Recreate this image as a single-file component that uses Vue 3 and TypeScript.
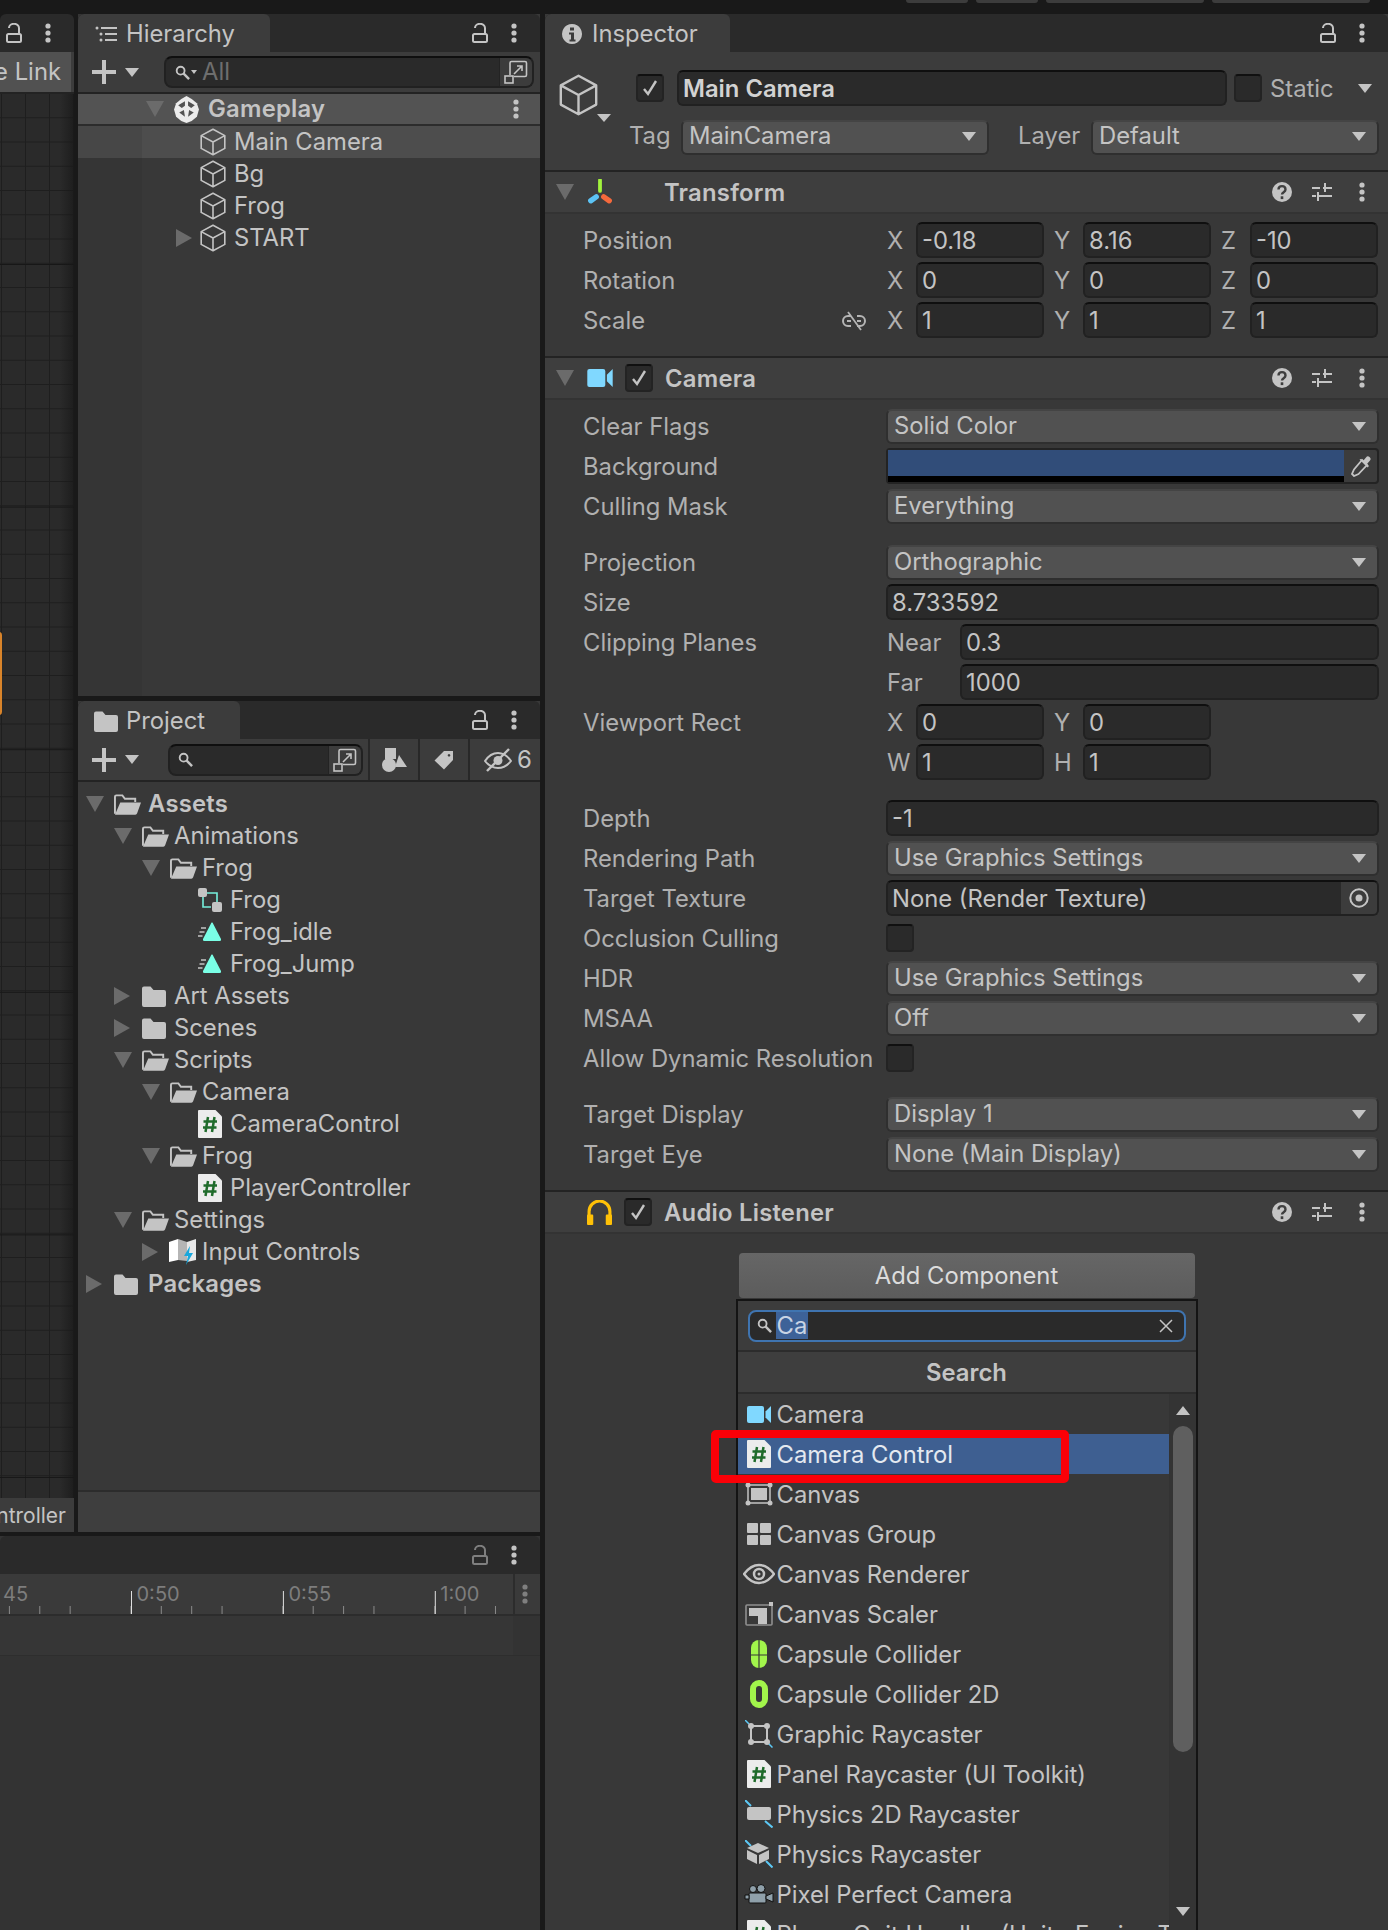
<script setup lang="ts">
type Row = {
  label: string
  kind: 'drop' | 'field' | 'obj' | 'check' | 'color' | 'plane' | 'vec'
  value?: string
  axes?: [string, string][]
  gap?: boolean
}

const hierarchyRows = [
  { name: 'Main Camera', selected: true },
  { name: 'Bg' },
  { name: 'Frog' },
  { name: 'START', arrow: 'closed' },
]

const projectRows = [
  { name: 'Assets', depth: 0, arrow: 'open', icon: 'folder-open', bold: true },
  { name: 'Animations', depth: 1, arrow: 'open', icon: 'folder-open' },
  { name: 'Frog', depth: 2, arrow: 'open', icon: 'folder-open' },
  { name: 'Frog', depth: 3, icon: 'anim-ctrl' },
  { name: 'Frog_idle', depth: 3, icon: 'clip' },
  { name: 'Frog_Jump', depth: 3, icon: 'clip' },
  { name: 'Art Assets', depth: 1, arrow: 'closed', icon: 'folder' },
  { name: 'Scenes', depth: 1, arrow: 'closed', icon: 'folder' },
  { name: 'Scripts', depth: 1, arrow: 'open', icon: 'folder-open' },
  { name: 'Camera', depth: 2, arrow: 'open', icon: 'folder-open' },
  { name: 'CameraControl', depth: 3, icon: 'script' },
  { name: 'Frog', depth: 2, arrow: 'open', icon: 'folder-open' },
  { name: 'PlayerController', depth: 3, icon: 'script' },
  { name: 'Settings', depth: 1, arrow: 'open', icon: 'folder-open' },
  { name: 'Input Controls', depth: 2, arrow: 'closed', icon: 'input-map' },
  { name: 'Packages', depth: 0, arrow: 'closed', icon: 'folder', bold: true },
]

const transformRows: Row[] = [
  { label: 'Position', kind: 'vec', axes: [['X', '-0.18'], ['Y', '8.16'], ['Z', '-10']] },
  { label: 'Rotation', kind: 'vec', axes: [['X', '0'], ['Y', '0'], ['Z', '0']] },
  { label: 'Scale', kind: 'vec', axes: [['X', '1'], ['Y', '1'], ['Z', '1']] },
]

const cameraRows: Row[] = [
  { label: 'Clear Flags', kind: 'drop', value: 'Solid Color' },
  { label: 'Background', kind: 'color' },
  { label: 'Culling Mask', kind: 'drop', value: 'Everything' },
  { label: 'Projection', kind: 'drop', value: 'Orthographic', gap: true },
  { label: 'Size', kind: 'field', value: '8.733592' },
  { label: 'Clipping Planes', kind: 'plane', axes: [['Near', '0.3']] },
  { label: '', kind: 'plane', axes: [['Far', '1000']] },
  { label: 'Viewport Rect', kind: 'vec', axes: [['X', '0'], ['Y', '0']] },
  { label: '', kind: 'vec', axes: [['W', '1'], ['H', '1']] },
  { label: 'Depth', kind: 'field', value: '-1', gap: true },
  { label: 'Rendering Path', kind: 'drop', value: 'Use Graphics Settings' },
  { label: 'Target Texture', kind: 'obj', value: 'None (Render Texture)' },
  { label: 'Occlusion Culling', kind: 'check' },
  { label: 'HDR', kind: 'drop', value: 'Use Graphics Settings' },
  { label: 'MSAA', kind: 'drop', value: 'Off' },
  { label: 'Allow Dynamic Resolution', kind: 'check' },
  { label: 'Target Display', kind: 'drop', value: 'Display 1', gap: true },
  { label: 'Target Eye', kind: 'drop', value: 'None (Main Display)' },
]

const searchResults = [
  { name: 'Camera', icon: 'camera' },
  { name: 'Camera Control', icon: 'script', active: true },
  { name: 'Canvas', icon: 'canvas' },
  { name: 'Canvas Group', icon: 'canvas-group' },
  { name: 'Canvas Renderer', icon: 'eye' },
  { name: 'Canvas Scaler', icon: 'scaler' },
  { name: 'Capsule Collider', icon: 'capsule' },
  { name: 'Capsule Collider 2D', icon: 'capsule-2d' },
  { name: 'Graphic Raycaster', icon: 'graphic-ray' },
  { name: 'Panel Raycaster (UI Toolkit)', icon: 'script' },
  { name: 'Physics 2D Raycaster', icon: 'ray-2d' },
  { name: 'Physics Raycaster', icon: 'ray-3d' },
  { name: 'Pixel Perfect Camera', icon: 'pixel-cam' },
  { name: 'Player Quit Handler (Unity Engine.T', icon: 'script' },
]

// timeline ruler: a tick every 30.4px, a long one with a label every fifth
const minorTicks = Array.from({ length: 18 }, (_, i) => 9.4 + i * 30.38).filter(
  (_, i) => (i + 1) % 5 !== 4,
)
const majorTicks = [
  { x: 131.5, label: '0:50' },
  { x: 283.4, label: '0:55' },
  { x: 435.3, label: '1:00' },
]
</script>

<template>
  <!-- shared icon sheet -->
  <svg class="defs" aria-hidden="true">
    <symbol id="lock" viewBox="0 0 16 20"><path d="M3 5a5 4.200 0 0 1 10 0v6" fill="none" stroke="currentColor" stroke-width="2"/><rect x="1" y="11" width="14" height="8" rx="1.500" fill="none" stroke="currentColor" stroke-width="2"/></symbol>
    <symbol id="dots" viewBox="0 0 8 20"><circle cx="4" cy="3" r="2.600" fill="currentColor"/><circle cx="4" cy="10" r="2.600" fill="currentColor"/><circle cx="4" cy="17" r="2.600" fill="currentColor"/></symbol>
    <symbol id="list" viewBox="0 0 22 16"><circle cx="2" cy="2" r="1.500" fill="currentColor"/><circle cx="6" cy="8" r="1.500" fill="currentColor"/><circle cx="6" cy="14" r="1.500" fill="currentColor"/><path d="M6 2h16M10 8h12M10 14h12" stroke="currentColor" stroke-width="2"/></symbol>
    <symbol id="plus" viewBox="0 0 24 24"><path d="M12 0v24M0 12h24" stroke="currentColor" stroke-width="4"/></symbol>
    <symbol id="search" viewBox="0 0 16 16"><circle cx="6" cy="6" r="4.200" fill="none" stroke="currentColor" stroke-width="2"/><path d="M9 9l6 6" stroke="currentColor" stroke-width="2.600"/></symbol>
    <symbol id="expand" viewBox="0 0 24 24"><path d="M6 15V3a1.500 1.500 0 0 1 1.500-1.500H21A1.500 1.500 0 0 1 22.500 3v12a1.500 1.500 0 0 1-1.500 1.500H10" fill="none" stroke="currentColor" stroke-width="1.600"/><rect x="1" y="16" width="8" height="7" fill="none" stroke="currentColor" stroke-width="1.600"/><path d="M10 14l8-8M13 6h5v5" fill="none" stroke="currentColor" stroke-width="1.600"/></symbol>
    <symbol id="cube" viewBox="0 0 26 28"><path d="M13 1.200l11.800 6.400v12.800L13 26.800 1.200 20.400V7.600zM1.200 7.600L13 14l11.800-6.400M13 14v12.800" fill="none" stroke="currentColor" stroke-width="1.600" stroke-linejoin="round"/></symbol>
    <symbol id="unity" viewBox="0 0 24 26"><path d="M12 0l5 3 5 4 2 6-2 7-5 4-5 2-5-2-5-4-2-7 2-6 5-4z" fill="#ececec"/><path d="M4 9l6.500-4v4.500l-3 2zM20 9l-6.500-4v4.500l3 2zM5 16l4.500-2.500 1 6.500zM19 16l-4.500-2.500-1 6.500z" fill="#535353"/></symbol>
    <symbol id="folder" viewBox="0 0 24 21"><path d="M0 2.500A2 2 0 0 1 2 .5h6.500l3 3.500H22a2 2 0 0 1 2 2v13a2 2 0 0 1-2 2H2a2 2 0 0 1-2-2z" fill="currentColor"/></symbol>
    <symbol id="folder-open" viewBox="0 0 28 21"><path d="M1 20V2.500A1.500 1.500 0 0 1 2.500 1h6.200l2.600 3.500H22V8" fill="none" stroke="currentColor" stroke-width="2"/><path d="M6.500 8.500H28l-4 11a2 2 0 0 1-2 1.500H1z" fill="currentColor"/></symbol>
    <symbol id="anim-ctrl" viewBox="0 0 24 24"><path d="M5 8v11h8M9 5h10v9" fill="none" stroke="#76f0dc" stroke-width="1.600"/><rect x="0" y="0" width="9" height="9" rx="2" fill="#c4c4c4"/><rect x="14" y="14" width="10" height="10" rx="2" fill="#c4c4c4"/></symbol>
    <symbol id="clip" viewBox="0 0 24 20"><path d="M15 1.500l8 15.500a1.500 1.500 0 0 1-1.300 2H6.300A1.500 1.500 0 0 1 5 17l8-15.500a1 1 0 0 1 2 0z" fill="#7affe6"/><path d="M3 6h5M1.500 10h5M0 14h4.500" stroke="#c4c4c4" stroke-width="1.500"/></symbol>
    <symbol id="script" viewBox="0 0 24 28"><path d="M0 1a1 1 0 0 1 1-1h16.500L24 6.500V27a1 1 0 0 1-1 1H1a1 1 0 0 1-1-1z" fill="#ececec"/><path d="M10 7L7.500 22M16.500 7L14 22M5.500 11.500h13.500M5 17.500h13.500" stroke="#1f6b2b" stroke-width="2.500"/></symbol>
    <symbol id="input-map" viewBox="0 0 28 26"><path d="M1 3l9-3v21l-9 2z" fill="#fff"/><path d="M10 0l9 3v19l-9-1z" fill="#b5b5b5"/><path d="M19 3l9-3v21l-9 2z" fill="#e8e8e8"/><path d="M22 7l-6 10h4l-2 9 7-12h-4z" fill="#19a7dc"/></symbol>
    <symbol id="filter-shapes" viewBox="0 0 25 24"><rect x="3" y="0" width="11" height="11" fill="currentColor"/><circle cx="7" cy="17" r="7" fill="currentColor"/><path d="M17 7l8 12H13z" fill="currentColor"/></symbol>
    <symbol id="tag" viewBox="0 0 20 20"><path d="M10 1h9v9l-9 9.500L.5 10.500zM15 4a1.300 1.300 0 1 0 .01 0" fill="currentColor" fill-rule="evenodd"/></symbol>
    <symbol id="eye-off" viewBox="0 0 28 24"><path d="M1 13c4-6 8-8 13-8s9 2 13 8c-4 5-8 7-13 7S5 18 1 13z" fill="none" stroke="currentColor" stroke-width="2"/><circle cx="14" cy="12.500" r="4.500" fill="currentColor"/><path d="M3 23L25 1" stroke="currentColor" stroke-width="2.400"/></symbol>
    <symbol id="info" viewBox="0 0 20 20"><path d="M10 0a10 10 0 1 0 .01 0zM8 3.500h4v3H8zM7 8.500h5v7h1.500v2h-6v-2H9v-5H7z" fill="currentColor" fill-rule="evenodd"/></symbol>
    <symbol id="help" viewBox="0 0 20 20"><circle cx="10" cy="10" r="10" fill="currentColor"/><path d="M6.500 7.500C6.500 3 13.500 3 13.500 7.500c0 2.800-3.500 2.500-3.500 5" fill="none" stroke="#3e3e3e" stroke-width="2.400"/><rect x="8.700" y="14.300" width="2.600" height="2.800" fill="#3e3e3e"/></symbol>
    <symbol id="sliders" viewBox="0 0 20 20"><path d="M0 6h8M11 6h9M13 1v9M0 14h4M7 14h13M6 10v9" stroke="currentColor" stroke-width="2"/></symbol>
    <symbol id="transform" viewBox="0 0 24 24"><path d="M12 1v10" stroke="#a2f33d" stroke-width="3.500" stroke-linecap="round"/><path d="M15.500 16.500l5 3.500" stroke="#f5693c" stroke-width="5" stroke-linecap="round"/><path d="M8.500 16.500L3.500 20" stroke="#5cc3f5" stroke-width="5" stroke-linecap="round"/></symbol>
    <symbol id="camera" viewBox="0 0 24 17"><rect x="0" y="0" width="17" height="17" rx="2" fill="#80d8ff"/><path d="M18.500 5.500L24 0v17l-5.500-5.500z" fill="#80d8ff"/></symbol>
    <symbol id="headphones" viewBox="0 0 24 24"><path d="M2 22V11a10 10 0 0 1 20 0v11" fill="none" stroke="#ffc107" stroke-width="3"/><rect x="0" y="14" width="6" height="10" rx="1" fill="#ffc107"/><rect x="18" y="14" width="6" height="10" rx="1" fill="#ffc107"/></symbol>
    <symbol id="check" viewBox="0 0 18 18"><path d="M3 10l4 5 8-13" fill="none" stroke="currentColor" stroke-width="2.400"/></symbol>
    <symbol id="dropper" viewBox="0 0 20 22"><path d="M11 5l5 5-8.500 9L3 21l-2-2 2-4.500z" fill="none" stroke="currentColor" stroke-width="1.800"/><path d="M10 4l2 2 3-3.500a2 2 0 0 1 4 3L16 9l2 2-1.500 1.500-8-8z" fill="currentColor"/></symbol>
    <symbol id="target" viewBox="0 0 20 20"><circle cx="10" cy="10" r="8.700" fill="none" stroke="currentColor" stroke-width="2"/><circle cx="10" cy="10" r="3.500" fill="currentColor"/></symbol>
    <symbol id="unlink" viewBox="0 0 24 20"><path d="M9 5H6a5 5 0 0 0 0 10h3M15 5h3a5 5 0 0 1 0 10h-3M5 10h4M15 10h4" fill="none" stroke="currentColor" stroke-width="2"/><path d="M6 1l13 18" stroke="currentColor" stroke-width="1.800"/></symbol>
    <symbol id="close" viewBox="0 0 14 14"><path d="M1 1l12 12M13 1L1 13" stroke="currentColor" stroke-width="1.500"/></symbol>
    <symbol id="canvas" viewBox="0 0 28 24"><rect x="3" y="3" width="22" height="18" fill="none" stroke="#c4c4c4" stroke-width="1.500"/><rect x="6" y="6" width="16" height="12" fill="#c4c4c4"/><g fill="#c4c4c4"><circle cx="3" cy="3" r="2.500"/><circle cx="25" cy="3" r="2.500"/><circle cx="3" cy="21" r="2.500"/><circle cx="25" cy="21" r="2.500"/></g></symbol>
    <symbol id="canvas-group" viewBox="0 0 26 22"><g fill="#c4c4c4"><rect x="1" y="0" width="11" height="10" rx="1"/><rect x="14" y="0" width="11" height="10" rx="1"/><rect x="1" y="12" width="11" height="10" rx="1"/><rect x="14" y="12" width="11" height="10" rx="1"/></g></symbol>
    <symbol id="eye" viewBox="0 0 32 22"><path d="M1 11c5-6.500 10-9 15-9s10 2.500 15 9c-5 6.500-10 9-15 9S6 17.500 1 11z" fill="none" stroke="#c4c4c4" stroke-width="2.400"/><circle cx="16" cy="11" r="5" fill="none" stroke="#c4c4c4" stroke-width="2.500"/><circle cx="16" cy="11" r="1.500" fill="#c4c4c4"/></symbol>
    <symbol id="scaler" viewBox="0 0 28 24"><rect x="1" y="3" width="26" height="20" rx="1" fill="none" stroke="#8f8f8f" stroke-width="1.600"/><path d="M4 6h18v16h-9v-8H4z" fill="#c4c4c4"/><rect x="24" y="0" width="4" height="4" fill="#c4c4c4"/></symbol>
    <symbol id="capsule" viewBox="0 0 16 28"><path d="M8 0a8 8 0 0 1 8 8v12a8 8 0 0 1-16 0V8a8 8 0 0 1 8-8z" fill="#a2f54b"/><path d="M8 0v28M0 15h16" stroke="#383838" stroke-width="1.200"/></symbol>
    <symbol id="capsule-2d" viewBox="0 0 18 28"><path d="M9 0a9 9 0 0 1 9 9v10a9 9 0 0 1-18 0V9a9 9 0 0 1 9-9zm0 6a3 3 0 0 0-3 3v10a3 3 0 0 0 6 0V9a3 3 0 0 0-3-3z" fill="#a2f54b" fill-rule="evenodd"/></symbol>
    <symbol id="graphic-ray" viewBox="0 0 28 28"><path d="M0 0l4 4M23 23l4.500 4.500" stroke="#5cc8f5" stroke-width="1.500"/><rect x="6" y="6" width="16" height="16" fill="none" stroke="#c4c4c4" stroke-width="2"/><g fill="#c4c4c4"><circle cx="6" cy="6" r="3"/><circle cx="22" cy="6" r="3"/><circle cx="6" cy="22" r="3"/><circle cx="22" cy="22" r="3"/></g></symbol>
    <symbol id="ray-2d" viewBox="0 0 28 28"><path d="M0 0l6 6M20 21l7.500 6.500" stroke="#5cc8f5" stroke-width="2"/><rect x="2" y="7" width="24" height="13" rx="2" fill="#c4c4c4"/></symbol>
    <symbol id="ray-3d" viewBox="0 0 28 28"><path d="M0 0l6 6M21 21l6.500 6.500" stroke="#5cc8f5" stroke-width="2"/><path d="M13 3l11 5-11 5L2 8z" fill="#c4c4c4"/><path d="M2 10l10 5v9L2 19zM14 15l10-5v9l-10 5z" fill="#c4c4c4"/></symbol>
    <symbol id="pixel-cam" viewBox="0 0 30 20"><g fill="#8fa0aa" stroke="#111" stroke-width="1"><circle cx="9" cy="5" r="3.500"/><circle cx="17" cy="4.500" r="4"/><rect x="5" y="9" width="17" height="10" rx="1"/><path d="M22 12l7-3v9l-7-3z"/><path d="M1 11h4v4H1z"/></g></symbol>
  </svg>

  <div class="editor">
    <div class="topbar">
      <span class="top-btn short" />
      <span class="top-btn short" />
      <span class="top-btn long" />
      <span class="top-btn long" />
    </div>

    <div class="left">
      <div class="upper">
        <!-- scene view, mostly off-screen -->
        <section class="scene">
          <div class="tabs scene-tabs">
            <svg class="ic-lock"><use href="#lock" /></svg>
            <svg class="ic-dots"><use href="#dots" /></svg>
          </div>
          <div class="scene-toolbar"><span class="scene-link">e Link</span></div>
          <div class="scene-grid">
            <i class="scene-gizmo" />
          </div>
          <div class="scene-status">ntroller</div>
        </section>

        <div class="side">
          <section class="hierarchy">
            <div class="tabs">
              <div class="tab tab-hierarchy">
                <svg class="ic-list"><use href="#list" /></svg>Hierarchy
              </div>
              <span class="tabs-fill" />
              <svg class="ic-lock"><use href="#lock" /></svg>
              <svg class="ic-dots"><use href="#dots" /></svg>
            </div>
            <div class="toolbar">
              <svg class="ic-plus"><use href="#plus" /></svg>
              <i class="tri-down small" />
              <div class="searchbox hier-search">
                <svg class="ic-search"><use href="#search" /></svg>
                <i class="tri-down tiny" />
                <span class="placeholder">All</span>
                <span class="tabs-fill" />
                <span class="expand"><svg><use href="#expand" /></svg></span>
              </div>
            </div>
            <div class="scene-row">
              <i class="tri-down" />
              <svg class="ic-unity"><use href="#unity" /></svg>
              <span class="bold">Gameplay</span>
              <span class="tabs-fill" />
              <svg class="ic-dots"><use href="#dots" /></svg>
            </div>
            <div class="hier-list">
              <div
                v-for="row in hierarchyRows"
                :key="row.name"
                class="hier-row"
                :class="{ selected: row.selected }"
              >
                <span class="arrow-slot"><i v-if="row.arrow" class="tri-right" /></span>
                <svg class="ic-cube"><use href="#cube" /></svg>
                <span>{{ row.name }}</span>
              </div>
            </div>
          </section>

          <section class="project">
            <div class="tabs">
              <div class="tab tab-project">
                <svg class="ic-folder-tab"><use href="#folder" /></svg>Project
              </div>
              <span class="tabs-fill" />
              <svg class="ic-lock"><use href="#lock" /></svg>
              <svg class="ic-dots"><use href="#dots" /></svg>
            </div>
            <div class="toolbar project-toolbar">
              <svg class="ic-plus"><use href="#plus" /></svg>
              <i class="tri-down small" />
              <div class="searchbox proj-search">
                <svg class="ic-search"><use href="#search" /></svg>
                <span class="tabs-fill" />
                <span class="expand"><svg><use href="#expand" /></svg></span>
              </div>
              <div class="tool-btn"><svg class="ic-shapes"><use href="#filter-shapes" /></svg></div>
              <div class="tool-btn"><svg class="ic-tag"><use href="#tag" /></svg></div>
              <div class="tool-btn tool-eye"><svg class="ic-eye-off"><use href="#eye-off" /></svg>6</div>
            </div>
            <div class="proj-tree">
              <div
                v-for="(row, i) in projectRows"
                :key="i"
                class="proj-row"
                :class="{ 'bold proj-top': row.bold }"
                :style="{ paddingLeft: 8 + row.depth * 28 + 'px' }"
              >
                <span class="arrow-slot">
                  <i v-if="row.arrow === 'open'" class="tri-down" />
                  <i v-else-if="row.arrow === 'closed'" class="tri-right" />
                </span>
                <svg class="ic-tree" :class="'tree-' + row.icon"><use :href="'#' + row.icon" /></svg>
                <span>{{ row.name }}</span>
              </div>
            </div>
            <div class="proj-footer" />
          </section>
        </div>
      </div>

      <section class="timeline">
        <div class="tabs">
          <span class="tabs-fill" />
          <svg class="ic-lock muted"><use href="#lock" /></svg>
          <svg class="ic-dots"><use href="#dots" /></svg>
        </div>
        <div class="ruler-row">
          <svg class="ruler" width="513" height="40">
            <text x="3" y="27" class="ruler-label">45</text>
            <line v-for="x in minorTicks" :key="x" :x1="x" :x2="x" y1="32" y2="40" stroke="#8a8a8a" />
            <g v-for="t in majorTicks" :key="t.label">
              <line :x1="t.x" :x2="t.x" y1="17" y2="40" stroke="#e0e0e0" />
              <text :x="t.x + 5" y="27" class="ruler-label">{{ t.label }}</text>
            </g>
          </svg>
          <div class="ruler-menu"><svg class="ic-dots muted"><use href="#dots" /></svg></div>
        </div>
        <div class="track-row"><span /></div>
      </section>
    </div>

    <section class="inspector">
      <div class="tabs">
        <div class="tab tab-inspector">
          <svg class="ic-info"><use href="#info" /></svg>Inspector
        </div>
        <span class="tabs-fill" />
        <svg class="ic-lock"><use href="#lock" /></svg>
        <svg class="ic-dots"><use href="#dots" /></svg>
      </div>

      <div class="object-head">
        <div class="object-icon">
          <svg class="ic-cube-big"><use href="#cube" /></svg>
          <i class="tri-down tiny2" />
        </div>
        <div class="object-fields">
          <div class="name-row">
            <span class="checkbox"><svg><use href="#check" /></svg></span>
            <div class="input name-input">Main Camera</div>
            <span class="checkbox" />
            <span class="static-label">Static</span>
            <i class="tri-down small" />
          </div>
          <div class="tag-row">
            <span class="tag-label">Tag</span>
            <div class="dropdown tag-drop">MainCamera<i class="tri-down mini" /></div>
            <span class="layer-label">Layer</span>
            <div class="dropdown layer-drop">Default<i class="tri-down mini" /></div>
          </div>
        </div>
      </div>

      <div class="comp-header">
        <i class="tri-down" />
        <svg class="ic-comp"><use href="#transform" /></svg>
        <span class="comp-check-slot" />
        <span class="bold">Transform</span>
        <span class="tabs-fill" />
        <svg class="ic-help"><use href="#help" /></svg>
        <svg class="ic-sliders"><use href="#sliders" /></svg>
        <svg class="ic-dots"><use href="#dots" /></svg>
      </div>
      <div class="comp-body">
        <div v-for="row in transformRows" :key="row.label" class="prop">
          <span class="prop-label">{{ row.label }}</span>
          <svg v-if="row.label === 'Scale'" class="ic-unlink"><use href="#unlink" /></svg>
          <div class="vec">
            <div v-for="a in row.axes" :key="a[0]" class="vec-cell">
              <span class="axis">{{ a[0] }}</span>
              <div class="input">{{ a[1] }}</div>
            </div>
          </div>
        </div>
      </div>

      <div class="comp-header">
        <i class="tri-down" />
        <svg class="ic-cam"><use href="#camera" /></svg>
        <span class="checkbox comp-check"><svg><use href="#check" /></svg></span>
        <span class="bold">Camera</span>
        <span class="tabs-fill" />
        <svg class="ic-help"><use href="#help" /></svg>
        <svg class="ic-sliders"><use href="#sliders" /></svg>
        <svg class="ic-dots"><use href="#dots" /></svg>
      </div>
      <div class="comp-body">
        <div
          v-for="(row, i) in cameraRows"
          :key="i"
          class="prop"
          :class="{ 'prop-gap': row.gap }"
        >
          <span class="prop-label">{{ row.label }}</span>
          <div v-if="row.kind === 'drop'" class="dropdown wide">
            {{ row.value }}<i class="tri-down mini" />
          </div>
          <div v-else-if="row.kind === 'field'" class="input wide">{{ row.value }}</div>
          <div v-else-if="row.kind === 'obj'" class="input wide obj-field">
            {{ row.value }}
            <span class="obj-pick"><svg><use href="#target" /></svg></span>
          </div>
          <span v-else-if="row.kind === 'check'" class="checkbox" />
          <div v-else-if="row.kind === 'color'" class="color-field">
            <div class="swatch"><span class="swatch-blue" /><span class="swatch-alpha" /></div>
            <span class="dropper"><svg><use href="#dropper" /></svg></span>
          </div>
          <div v-else-if="row.kind === 'plane'" class="plane">
            <span class="plane-label">{{ row.axes![0][0] }}</span>
            <div class="input">{{ row.axes![0][1] }}</div>
          </div>
          <div v-else class="vec">
            <div v-for="a in row.axes" :key="a[0]" class="vec-cell">
              <span class="axis">{{ a[0] }}</span>
              <div class="input">{{ a[1] }}</div>
            </div>
          </div>
        </div>
      </div>

      <div class="comp-header audio-header">
        <span class="tri-slot" />
        <svg class="ic-phones"><use href="#headphones" /></svg>
        <span class="checkbox comp-check"><svg><use href="#check" /></svg></span>
        <span class="bold">Audio Listener</span>
        <span class="tabs-fill" />
        <svg class="ic-help"><use href="#help" /></svg>
        <svg class="ic-sliders"><use href="#sliders" /></svg>
        <svg class="ic-dots"><use href="#dots" /></svg>
      </div>

      <div class="add-area">
        <div class="add-button">Add Component</div>
        <div class="picker">
          <div class="picker-search">
            <div class="picker-input">
              <svg class="ic-search"><use href="#search" /></svg>
              <span class="picker-sel">Ca</span>
              <span class="tabs-fill" />
              <svg class="ic-close"><use href="#close" /></svg>
            </div>
          </div>
          <div class="picker-title">Search</div>
          <div class="picker-body">
            <div class="picker-list">
              <div
                v-for="item in searchResults"
                :key="item.name"
                class="picker-row"
                :class="{ active: item.active }"
              >
                <span class="picker-icon">
                  <svg :class="'pi-' + item.icon"><use :href="'#' + item.icon" /></svg>
                </span>
                <span class="picker-name">{{ item.name }}</span>
              </div>
            </div>
            <div class="scrollbar">
              <i class="tri-up" />
              <span class="thumb" />
              <i class="tri-down scroll-down" />
            </div>
          </div>
          <div class="callout" />
        </div>
      </div>
    </section>
  </div>
</template>

<style scoped>
.defs {
  position: absolute;
  width: 0;
  height: 0;
}
.editor {
  display: grid;
  grid-template-columns: 540px 843px;
  grid-template-rows: 14px 1916px;
  column-gap: 5px;
  width: 1388px;
  height: 1930px;
  overflow: hidden;
  background: #191919;
  color: #c4c4c4;
  font-family: Inter, "Noto Sans", sans-serif;
  font-size: 23.8px;
  line-height: 1;
}
.topbar {
  grid-column: 1 / 3;
  display: flex;
  gap: 8px;
  padding-left: 906px;
  height: 3px;
}
.top-btn {
  background: #3c3c3c;
  border-radius: 0 0 3px 3px;
}
.top-btn.short {
  width: 62px;
}
.top-btn.long {
  width: 158px;
}
.left {
  display: flex;
  flex-direction: column;
  gap: 4px;
  min-height: 0;
}
.upper {
  display: grid;
  grid-template-columns: 74px 462px;
  gap: 4px;
  height: 1518px;
}
.side {
  display: flex;
  flex-direction: column;
  gap: 5px;
}
section {
  overflow: hidden;
}
.bold {
  font-weight: 600;
  letter-spacing: .25px;
}
.tabs {
  display: flex;
  align-items: center;
  flex: none;
  height: 38px;
  padding-right: 22px;
  background: #2a2a2a;
  border-radius: 6px 6px 0 0;
  overflow: hidden;
}
.tabs-fill {
  flex: 1;
}
.tab {
  display: flex;
  align-items: center;
  align-self: stretch;
  padding-top: 2px;
  background: #3c3c3c;
  border-radius: 6px 6px 0 0;
  box-sizing: border-box;
}
.tab-hierarchy {
  width: 192px;
  padding-left: 17px;
  gap: 9px;
}
.tab-project {
  width: 162px;
  padding-left: 16px;
  gap: 8px;
}
.tab-inspector {
  width: 185px;
  padding-left: 17px;
  gap: 10px;
}
.ic-list {
  width: 22px;
  height: 16px;
}
.ic-folder-tab {
  width: 24px;
  height: 21px;
}
.ic-info {
  width: 20px;
  height: 20px;
}
.ic-lock {
  width: 16px;
  height: 20px;
  margin-right: 22px;
}
.ic-dots {
  width: 8px;
  height: 20px;
}
.muted {
  color: #7f7f7f;
}
.toolbar {
  display: flex;
  align-items: center;
  flex: none;
  height: 40px;
  background: #3c3c3c;
  border-bottom: 2px solid #232323;
  padding-left: 14px;
}
.ic-plus {
  width: 24px;
  height: 24px;
  margin-right: 9px;
}
.tri-down {
  display: inline-block;
  flex: none;
  width: 0;
  height: 0;
  border-left: 9px solid transparent;
  border-right: 9px solid transparent;
  border-top: 16px solid #6b6b6b;
}
.tri-right {
  display: inline-block;
  width: 0;
  height: 0;
  border-top: 9px solid transparent;
  border-bottom: 9px solid transparent;
  border-left: 16px solid #6b6b6b;
}
.tri-up {
  display: block;
  width: 0;
  height: 0;
  border-left: 7px solid transparent;
  border-right: 7px solid transparent;
  border-bottom: 9px solid #c4c4c4;
}
.tri-down.small {
  border-left-width: 7px;
  border-right-width: 7px;
  border-top: 9px solid #c4c4c4;
}
.tri-down.tiny {
  border-left-width: 3px;
  border-right-width: 3px;
  border-top: 4px solid #c4c4c4;
}
.tri-down.mini {
  border-left-width: 7px;
  border-right-width: 7px;
  border-top: 9px solid #c4c4c4;
  margin-left: auto;
}
.tri-down.tiny2 {
  border-left-width: 7px;
  border-right-width: 7px;
  border-top: 8px solid #c4c4c4;
}
.searchbox {
  display: flex;
  align-items: center;
  box-sizing: border-box;
  height: 32px;
  background: #2a2a2a;
  border: 2px solid #212121;
  border-top-color: #0f0f0f;
  border-radius: 8px;
  overflow: hidden;
}
.hier-search {
  width: 370px;
  margin-left: 25px;
  padding-left: 9px;
  gap: 1px;
}
.proj-search {
  flex: none;
  width: 195px;
  margin-left: 29px;
  padding-left: 8px;
}
.ic-search {
  width: 15px;
  height: 15px;
  flex: none;
}
.placeholder {
  margin-left: 4px;
  color: #6e6e6e;
}
.expand {
  display: flex;
  align-items: center;
  justify-content: center;
  width: 32px;
  align-self: stretch;
  background: #3c3c3c;
  border-left: 1px solid #232323;
}
.expand svg {
  width: 24px;
  height: 24px;
}
/* hierarchy */
.hierarchy {
  display: flex;
  flex-direction: column;
  height: 682px;
  background: linear-gradient(90deg, #353535 64px, #383838 64px);
}
.scene-row {
  display: flex;
  align-items: center;
  flex: none;
  height: 30px;
  padding: 0 20px 0 68px;
  background: #535353;
  border-bottom: 2px solid #2c2c2c;
}
.ic-unity {
  width: 25px;
  height: 27px;
  margin: 0 9px 0 10px;
}
.hier-list {
  display: flex;
  flex-direction: column;
}
.hier-row {
  display: flex;
  align-items: center;
  height: 32px;
  padding-left: 96px;
}
.hier-row.selected {
  background: linear-gradient(90deg, #474747 64px, #4d4d4d 64px);
}
.hier-row .arrow-slot {
  justify-content: flex-end;
  margin-right: 8px;
}
.arrow-slot {
  display: flex;
  align-items: center;
  flex: none;
  width: 18px;
  margin-right: 10px;
}
.ic-cube {
  width: 26px;
  height: 28px;
  margin-right: 8px;
}
/* project */
.project {
  display: flex;
  flex-direction: column;
  flex: 1;
  background: #383838;
}
.project-toolbar {
  height: 41px;
  padding-right: 0;
}
.tool-btn {
  display: flex;
  align-items: center;
  justify-content: center;
  align-self: stretch;
  width: 50px;
  border-left: 2px solid #282828;
  box-sizing: border-box;
}
.tool-btn:nth-of-type(2) {
  margin-left: 5px;
}
.tool-eye {
  width: 68px;
  justify-content: flex-start;
  padding-left: 14px;
  gap: 5px;
  font-size: 24px;
}
.ic-shapes {
  width: 25px;
  height: 24px;
}
.ic-tag {
  width: 20px;
  height: 20px;
}
.ic-eye-off {
  width: 28px;
  height: 24px;
}
.proj-tree {
  flex: 1;
  padding-top: 6px;
}
.proj-row {
  display: flex;
  align-items: center;
  height: 32px;
}
.ic-tree {
  flex: none;
  width: 27px;
  height: 22px;
  margin-right: 5px;
}
.proj-top .ic-tree {
  margin-right: 7px;
}
.tree-folder {
  width: 24px;
  height: 21px;
  margin-right: 8px;
}
.proj-top .tree-folder {
  margin-right: 10px;
}
.tree-folder-open {
  height: 21px;
}
.tree-anim-ctrl,
.tree-clip {
  width: 24px;
  height: 24px;
  margin-right: 8px;
}
.tree-script {
  width: 24px;
  height: 28px;
  margin-right: 8px;
}
.tree-input-map {
  width: 28px;
  height: 26px;
  margin: 0 6px 0 -2px;
}
.proj-footer {
  flex: none;
  height: 40px;
  background: #3e3e3e;
  border-top: 2px solid #2c2c2c;
}
/* scene */
.scene {
  display: flex;
  flex-direction: column;
  height: 100%;
}
.scene-tabs {
  padding: 0 0 0 6px;
}
.scene-toolbar {
  flex: none;
  height: 40px;
  background: #3c3c3c;
  overflow: hidden;
}
.scene-link {
  display: flex;
  align-items: center;
  justify-content: flex-end;
  box-sizing: border-box;
  width: 71px;
  height: 40px;
  padding-right: 10px;
  background: #515151;
  white-space: nowrap;
}
.scene-grid {
  flex: 1;
  position: relative;
  background-color: #2a2a2a;
  background-image:
    linear-gradient(90deg, transparent 60px, rgba(24, 24, 24, .7) 74px),
    linear-gradient(#171717 1px, transparent 1px),
    linear-gradient(#1e1e1e 1px, transparent 1px),
    linear-gradient(90deg, #1e1e1e 1px, transparent 1px);
  background-size: 100% 100%, 100% 242.6px, 100% 24.26px, 24px 100%;
  background-position: 0 0, 0 170px, 0 -1px, 1px 0;
  border-top: 2px solid #232323;
}
.scene-gizmo {
  position: absolute;
  left: -4px;
  top: 538px;
  width: 6px;
  height: 83px;
  background: #d9842a;
  border-radius: 4px;
}
.scene-status {
  flex: none;
  height: 34px;
  display: flex;
  align-items: center;
  justify-content: flex-end;
  padding-right: 8px;
  background: #3c3c3c;
  white-space: nowrap;
  overflow: hidden;
  font-size: 21px;
}
/* timeline */
.timeline {
  flex: 1;
  display: flex;
  flex-direction: column;
  background: #333;
  min-height: 0;
}
.ruler-row {
  display: flex;
  flex: none;
  height: 40px;
  background: #3a3a3a;
  border-bottom: 2px solid #2c2c2c;
}
.ruler {
  flex: none;
}
.ruler-label {
  fill: #7d7d7d;
  font-size: 20px;
  font-family: Inter, sans-serif;
}
.ruler-menu {
  display: flex;
  align-items: center;
  justify-content: center;
  flex: 1;
  padding-right: 6px;
  border-left: 2px solid #2c2c2c;
}
.track-row {
  height: 39px;
  border-bottom: 1px solid #2e2e2e;
  background: linear-gradient(90deg, #363636 513px, #333 513px);
}
/* inspector */
.inspector {
  display: flex;
  flex-direction: column;
  background: #383838;
  min-height: 0;
  height: 1916px;
}
.object-head {
  display: flex;
  flex: none;
  box-sizing: border-box;
  height: 118px;
  background: #3c3c3c;
  padding: 18px 9px 0 13px;
}
.object-icon {
  position: relative;
  flex: none;
  width: 78px;
}
.ic-cube-big {
  display: block;
  width: 41px;
  height: 42px;
  margin-top: 4px;
}
.object-icon .tri-down {
  position: absolute;
  left: 39px;
  top: 44px;
}
.object-fields {
  flex: 1;
  display: flex;
  flex-direction: column;
  gap: 13px;
}
.name-row {
  display: flex;
  align-items: center;
  height: 36px;
}
.checkbox {
  display: flex;
  align-items: center;
  justify-content: center;
  flex: none;
  box-sizing: border-box;
  width: 28px;
  height: 28px;
  background: #2a2a2a;
  border: 2px solid #232323;
  border-top-color: #101010;
  border-radius: 4px;
}
.checkbox svg {
  width: 18px;
  height: 18px;
}
.name-row .checkbox:first-child {
  margin: 0 13px 0 0;
}
.input {
  display: flex;
  align-items: center;
  flex: 1;
  box-sizing: border-box;
  height: 36px;
  padding: 2px 0 0 4px;
  background: #2a2a2a;
  border: 2px solid #212121;
  border-top-color: #0f0f0f;
  border-radius: 6px;
  white-space: nowrap;
  overflow: hidden;
}
.name-input {
  flex: none;
  width: 550px;
  font-weight: 600;
  margin-right: 7px;
  color: #d2d2d2;
}
.static-label {
  margin: 0 0 0 8px;
  padding-top: 2px;
  color: #b0b0b0;
}
.name-row .tri-down {
  margin-left: 24px;
}
.tag-row {
  display: flex;
  align-items: center;
  height: 36px;
}
.tag-label {
  margin-left: -7px;
  color: #b0b0b0;
  width: 52px;
}
.tag-drop {
  width: 308px;
}
.layer-label {
  margin-left: 29px;
  width: 73px;
  color: #b0b0b0;
}
.layer-drop {
  width: 288px;
}
.tag-row > span,
.tag-row > .dropdown {
  padding-bottom: 2px;
}
.dropdown {
  display: flex;
  align-items: center;
  flex: none;
  box-sizing: border-box;
  height: 35px;
  padding: 0 11px 0 6px;
  background: #515151;
  border: 2px solid #2f2f2f;
  border-top-color: #444;
  border-radius: 6px;
  white-space: nowrap;
}
.comp-header {
  display: flex;
  align-items: center;
  flex: none;
  box-sizing: border-box;
  height: 44px;
  padding: 0 22px 0 11px;
  background: #3e3e3e;
  border-top: 2px solid #232323;
  border-bottom: 2px solid #333;
}
.comp-header .bold {
  padding-top: 2px;
}
.comp-header .ic-dots {
  margin-left: 26px;
}
.ic-comp {
  width: 26px;
  height: 26px;
  margin-left: 13px;
}
.ic-cam {
  width: 26px;
  height: 18px;
  margin-left: 13px;
}
.ic-phones {
  width: 25px;
  height: 25px;
  margin-left: 13px;
}
.tri-slot {
  width: 18px;
}
.comp-check-slot {
  width: 51px;
}
.comp-check {
  margin: 0 12px 0 12px;
}
.ic-help {
  width: 20px;
  height: 20px;
  margin-left: 2px;
}
.ic-sliders {
  width: 20px;
  height: 20px;
  margin-left: 20px;
}
.comp-body {
  flex: none;
  padding: 6px 9px 16px 38px;
}
.prop {
  display: flex;
  align-items: center;
  position: relative;
  height: 40px;
}
.prop-gap {
  margin-top: 16px;
}
.prop-label {
  flex: none;
  width: 303px;
  padding-top: 2px;
  color: #b0b0b0;
  white-space: nowrap;
}
.ic-unlink {
  position: absolute;
  left: 259px;
  top: 11px;
  width: 24px;
  height: 20px;
  color: #b5b5b5;
}
.vec {
  display: grid;
  grid-template-columns: repeat(3, 158px);
  column-gap: 9px;
}
.vec-cell {
  display: flex;
  align-items: center;
}
.axis {
  flex: none;
  width: 30px;
  padding: 2px 0 0 1px;
  box-sizing: border-box;
  color: #b0b0b0;
}
.wide {
  flex: 1;
}
.obj-field {
  padding-right: 0;
}
.obj-pick {
  display: flex;
  align-items: center;
  justify-content: center;
  width: 36px;
  align-self: stretch;
  margin: -2px 0 0 auto;
  background: #3c3c3c;
}
.obj-pick svg {
  width: 20px;
  height: 20px;
}
.color-field {
  display: flex;
  flex: 1;
  box-sizing: border-box;
  height: 36px;
  border: 2px solid #232323;
  border-radius: 4px;
  background: #3c3c3c;
}
.swatch {
  display: flex;
  flex-direction: column;
  width: 456px;
}
.swatch-blue {
  flex: 1;
  background: #314d79;
}
.swatch-alpha {
  height: 6px;
  background: #000;
}
.dropper {
  display: flex;
  align-items: center;
  justify-content: center;
  flex: 1;
}
.dropper svg {
  width: 20px;
  height: 22px;
}
.plane {
  display: flex;
  align-items: center;
  flex: 1;
}
.plane-label {
  flex: none;
  width: 74px;
  padding: 2px 0 0 1px;
  box-sizing: border-box;
  color: #b0b0b0;
}
/* add component */
.add-area {
  display: flex;
  flex-direction: column;
  align-items: center;
  flex: 1;
  min-height: 0;
  padding-top: 19px;
  overflow: hidden;
}
.add-button {
  display: flex;
  align-items: center;
  justify-content: center;
  flex: none;
  width: 456px;
  height: 45px;
  background: linear-gradient(#666, #5c5c5c);
  border-radius: 4px;
  color: #dcdcdc;
}
.picker {
  position: relative;
  flex: none;
  width: 462px;
  height: 640px;
  margin-top: 1px;
  box-sizing: border-box;
  border: 2px solid #141414;
  border-bottom: 0;
  background: #383838;
}
.picker-search {
  display: flex;
  align-items: center;
  justify-content: center;
  height: 49px;
  background: #3c3c3c;
  border-bottom: 2px solid #2c2c2c;
}
.picker-input {
  display: flex;
  align-items: center;
  box-sizing: border-box;
  width: 438px;
  height: 32px;
  padding: 0 11px 0 7px;
  background: #2a2a2a;
  border: 2px solid #3f74b0;
  border-radius: 8px;
}
.picker-sel {
  margin-left: 4px;
  padding: 2px 1px;
  background: #3d6298;
  color: #c8d4e4;
}
.ic-close {
  width: 14px;
  height: 14px;
}
.picker-title {
  display: flex;
  align-items: center;
  justify-content: center;
  box-sizing: border-box;
  height: 42px;
  padding-top: 2px;
  background: #3e3e3e;
  border-bottom: 2px solid #2c2c2c;
  font-weight: 600;
}
.picker-body {
  display: flex;
  height: 537px;
  overflow: hidden;
}
.picker-list {
  width: 431px;
  flex: none;
}
.picker-row {
  display: flex;
  align-items: center;
  height: 40px;
  padding-left: 5px;
  white-space: nowrap;
  overflow: hidden;
}
.picker-row.active {
  background: #3e5f91;
  color: #e4e9f0;
}
.picker-icon {
  display: flex;
  align-items: center;
  justify-content: center;
  flex: none;
  width: 32px;
  margin-right: 2px;
}
.picker-name {
  padding-top: 2px;
}
.pi-camera { width: 24px; height: 17px; }
.pi-script { width: 24px; height: 28px; }
.pi-canvas { width: 28px; height: 24px; }
.pi-canvas-group { width: 26px; height: 22px; }
.pi-eye { width: 32px; height: 24px; }
.pi-scaler { width: 28px; height: 24px; }
.pi-capsule { width: 16px; height: 28px; }
.pi-capsule-2d { width: 18px; height: 28px; }
.pi-graphic-ray, .pi-ray-2d, .pi-ray-3d { width: 28px; height: 28px; }
.pi-pixel-cam { width: 30px; height: 20px; }
.scrollbar {
  display: flex;
  flex-direction: column;
  align-items: center;
  flex: 1;
  background: #343434;
  padding-top: 12px;
  border-left: 1px solid #333;
}
.thumb {
  flex: none;
  width: 20px;
  height: 326px;
  margin-top: 11px;
  border-radius: 10px;
  background: #5f5f5f;
}
.scroll-down {
  margin-top: 155px;
  border-left-width: 7px !important;
  border-right-width: 7px !important;
  border-top: 9px solid #c4c4c4 !important;
}
.callout {
  position: absolute;
  left: -27px;
  top: 129px;
  width: 358px;
  height: 53px;
  box-sizing: border-box;
  border: 8px solid #fb0007;
  border-radius: 5px;
}
</style>

<style>
body {
  background: #191919;
}
</style>
